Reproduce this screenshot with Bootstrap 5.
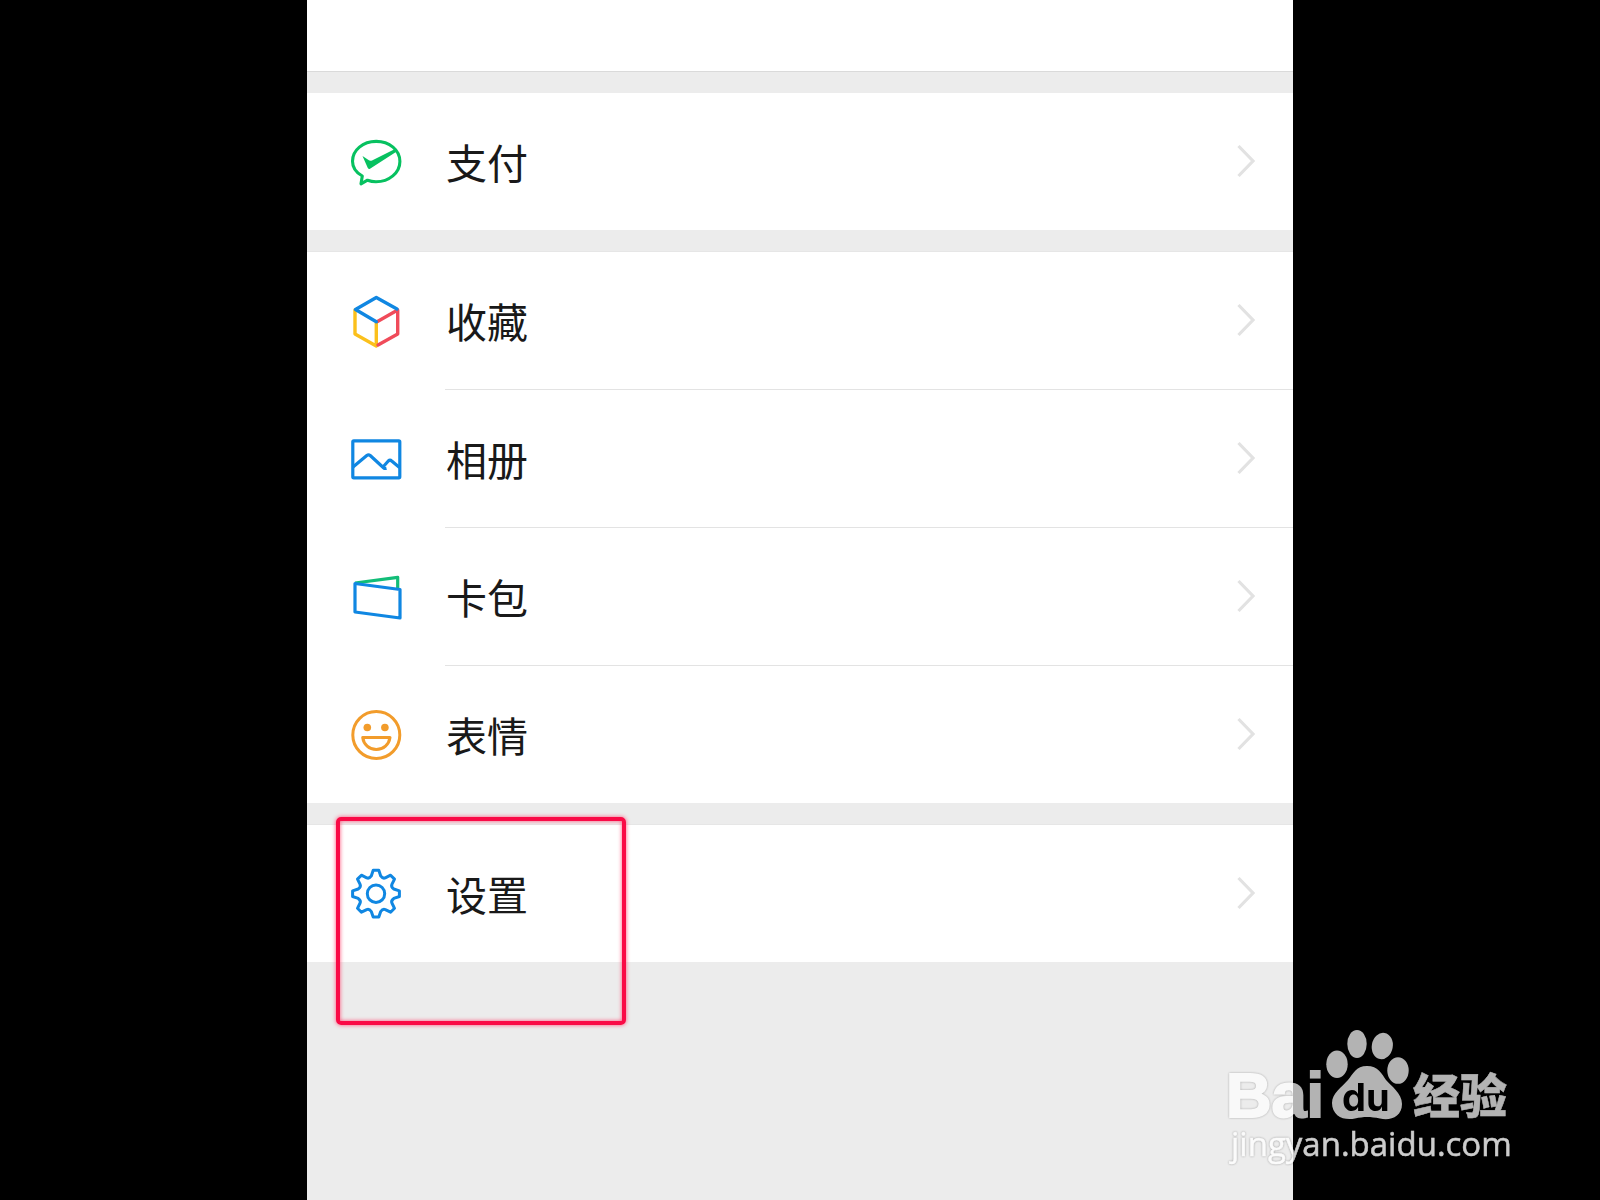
<!DOCTYPE html>
<html lang="zh-CN">
<head>
<meta charset="utf-8">
<meta name="viewport" content="width=device-width, initial-scale=1">
<title>设置</title>
<link href="https://cdn.jsdelivr.net/npm/bootstrap@5.3.0/dist/css/bootstrap.min.css" rel="stylesheet">
<style>
body { background: #000; font-family: "Noto Sans CJK SC", sans-serif; }
.phone { max-width: 986px; background: #ececec; }
.top-strip { height: 72px; border-bottom: 1px solid #dadada; }
.menu-group { margin-top: 22px; }
.top-strip + .menu-group { margin-top: 21px; }
.menu-group + .menu-group { box-shadow: 0 -1px 0 #e6e6e6; }
.menu-link { height: 137px; padding-left: 39px; color: #191919; font-size: 41px; line-height: 60px; }
.menu-link .label-text { margin-left: 40px; padding-bottom: 2px; }
.menu-link .arrow { margin-right: 37px; margin-bottom: 1px; }
.split { height: 1px; margin-left: 138px; background: #e3e3e3; }
.marker { left: 29px; top: -8px; width: 290px; height: 208px; border: 4px solid #fa0a46; border-radius: 5px; box-shadow: 0 0 4px #ff5078, inset 0 0 4px #ff5078; pointer-events: none; }
.watermark { right: 80px; bottom: 30px; }
.wm-halo { filter: drop-shadow(0 0 1px rgba(0, 0, 0, .4)); }
.wm-latin { font-family: "Liberation Sans", sans-serif; font-weight: 700; }
.wm-du { font-family: Inter, sans-serif; font-weight: 700; }
.wm-url { font-family: "Open Sans", sans-serif; font-weight: 500; }
</style>
<script defer src="https://cdn.jsdelivr.net/npm/bootstrap@5.3.0/dist/js/bootstrap.bundle.min.js"></script>
</head>
<body>
<svg class="d-none" aria-hidden="true">
  <symbol id="chevron" viewBox="0 0 20 36"><path d="M2.5 3L17 18L2.5 33" fill="none" stroke="#e2e2e2" stroke-width="3.200"/></symbol>
</svg>
<main class="phone mx-auto min-vh-100">
  <div class="top-strip bg-white"></div>

  <nav class="menu-group bg-white">
    <a href="#" class="menu-link d-flex align-items-center text-decoration-none">
      <svg width="60" height="61" viewBox="0 0 60 61" fill="none" stroke="#07c160" stroke-width="3.100" stroke-linejoin="round" aria-hidden="true">
        <path d="M16.3 45C10 41.500 6.500 36 6.500 30.200C6.500 19 17 10.400 30.200 10.400S53.900 19 53.900 30.400S43 50.700 30 50.700C27 50.700 24 50.100 21.500 49.200L15 52.800Z"/>
        <path d="M16.500 25L22.500 29Q24 30.200 26 29.400L49 18L51.500 20L24 37.800Q22.700 38.500 21.800 37Z" fill="#07c160" stroke="none"/>
      </svg>
      <span class="label-text flex-grow-1">支付</span>
      <svg class="arrow" width="20" height="36" aria-hidden="true"><use href="#chevron"/></svg>
    </a>
  </nav>

  <nav class="menu-group bg-white">
    <a href="#" class="menu-link d-flex align-items-center text-decoration-none">
      <svg width="60" height="61" viewBox="0 0 60 61" fill="none" stroke-width="3.400" stroke-linecap="round" stroke-linejoin="round" aria-hidden="true">
        <path d="M9 20V44L30.300 56V33" stroke="#fbc01c"/>
        <path d="M32 55L51.700 44V20L31.500 31.500" stroke="#f04b5a"/>
        <path d="M9.500 19.500L30.300 7.500L51 19M9.500 19.500L30.300 31.700" stroke="#1087e2"/>
      </svg>
      <span class="label-text flex-grow-1">收藏</span>
      <svg class="arrow" width="20" height="36" aria-hidden="true"><use href="#chevron"/></svg>
    </a>
    <div class="split"></div>
    <a href="#" class="menu-link d-flex align-items-center text-decoration-none">
      <svg width="60" height="61" viewBox="0 0 60 61" fill="none" stroke="#1087e2" stroke-width="3.200" stroke-linejoin="round" aria-hidden="true">
        <rect x="6.800" y="12.800" width="47" height="37" rx="1"/>
        <path d="M7 39L20.800 27.500Q22.500 26.200 24.200 27.500L37.500 39.700Q38.700 40.800 40.500 40.400M37 39L42.300 33Q44 31.500 45.700 33L53.500 39.500"/>
      </svg>
      <span class="label-text flex-grow-1">相册</span>
      <svg class="arrow" width="20" height="36" aria-hidden="true"><use href="#chevron"/></svg>
    </a>
    <div class="split"></div>
    <a href="#" class="menu-link d-flex align-items-center text-decoration-none">
      <svg width="60" height="61" viewBox="0 0 60 61" fill="none" stroke-width="3.200" stroke-linejoin="round" aria-hidden="true">
        <path d="M9 17L51.700 11.300V23" stroke="#12bd78"/>
        <path d="M9 17.500L54 23.500V52L9 46Z" stroke="#1087e2"/>
      </svg>
      <span class="label-text flex-grow-1">卡包</span>
      <svg class="arrow" width="20" height="36" aria-hidden="true"><use href="#chevron"/></svg>
    </a>
    <div class="split"></div>
    <a href="#" class="menu-link d-flex align-items-center text-decoration-none">
      <svg width="60" height="61" viewBox="0 0 60 61" fill="none" stroke="#f29c2b" stroke-width="3" stroke-linejoin="round" aria-hidden="true">
        <circle cx="30.300" cy="31" r="23.500"/>
        <circle cx="21.300" cy="23.500" r="3.800" fill="#f29c2b" stroke="none"/>
        <circle cx="38.900" cy="23.500" r="3.800" fill="#f29c2b" stroke="none"/>
        <path d="M16.700 33.500H44C43 40.500 37.500 45.500 30.300 45.500S17.700 40.500 16.700 33.500Z"/>
      </svg>
      <span class="label-text flex-grow-1">表情</span>
      <svg class="arrow" width="20" height="36" aria-hidden="true"><use href="#chevron"/></svg>
    </a>
  </nav>

  <nav class="menu-group bg-white position-relative">
    <a href="#" class="menu-link d-flex align-items-center text-decoration-none">
      <svg width="60" height="61" viewBox="-30 -30.700 60 61" fill="none" stroke="#1087e2" stroke-width="3" stroke-linejoin="round" aria-hidden="true">
        <path d="M-2.800 -23.400H2.800L4.700 -17.800Q6.800 -14.800 9.300 -15.900L14.600 -18.500L18.500 -14.600L15.900 -9.300Q14.800 -6.800 17.800 -4.700L23.400 -2.800V2.800L17.800 4.700Q14.800 6.800 15.900 9.300L18.500 14.600L14.600 18.500L9.300 15.900Q6.800 14.800 4.700 17.800L2.800 23.400H-2.800L-4.700 17.800Q-6.800 14.800 -9.300 15.900L-14.600 18.500L-18.500 14.600L-15.900 9.300Q-14.800 6.800 -17.800 4.700L-23.400 2.800V-2.800L-17.800 -4.700Q-14.800 -6.800 -15.900 -9.300L-18.500 -14.600L-14.600 -18.500L-9.300 -15.900Q-6.800 -14.800 -4.700 -17.800Z"/>
        <circle r="8.700"/>
      </svg>
      <span class="label-text flex-grow-1">设置</span>
      <svg class="arrow" width="20" height="36" aria-hidden="true"><use href="#chevron"/></svg>
    </a>
    <div class="marker position-absolute"></div>
  </nav>
</main>

<svg class="watermark position-fixed" width="300" height="150" viewBox="0 0 300 150" role="img" aria-label="Baidu 经验">
  <g opacity="0.700" fill="#fff">
    <g class="wm-halo">
      <text class="wm-latin" x="6" y="97" font-size="63" stroke="#fff" stroke-width="2">Bai</text>
    </g>
    <text x="193" y="93" font-size="47" font-weight="900" stroke="#fff" stroke-width="0.500">经验</text>
    <ellipse cx="137" cy="24" rx="9.700" ry="14"/>
    <ellipse cx="162.300" cy="26" rx="10.500" ry="13.300" transform="rotate(10 162.300 26)"/>
    <ellipse cx="117" cy="44.300" rx="10.700" ry="13.700"/>
    <ellipse cx="178" cy="50.500" rx="10.700" ry="13.300"/>
    <path d="M147 46C158 46 162 54 166 60C171 66 182 73 182 84C182 97 170 101 160 98.500C150 96.500 144 96.500 135 98.500C124 101 112 96 112 83C112 73 122 67 128 60C133 54 136 46 147 46Z"/>
    <text class="wm-du" x="122" y="91" font-size="38" fill="#000">du</text>
  </g>
  <g opacity="0.800">
    <g class="wm-halo">
      <text class="wm-url" x="11" y="136" font-size="33" fill="#fff" stroke="#fff" stroke-width="0.500">jingyan.baidu.com</text>
    </g>
  </g>
</svg>
</body>
</html>
